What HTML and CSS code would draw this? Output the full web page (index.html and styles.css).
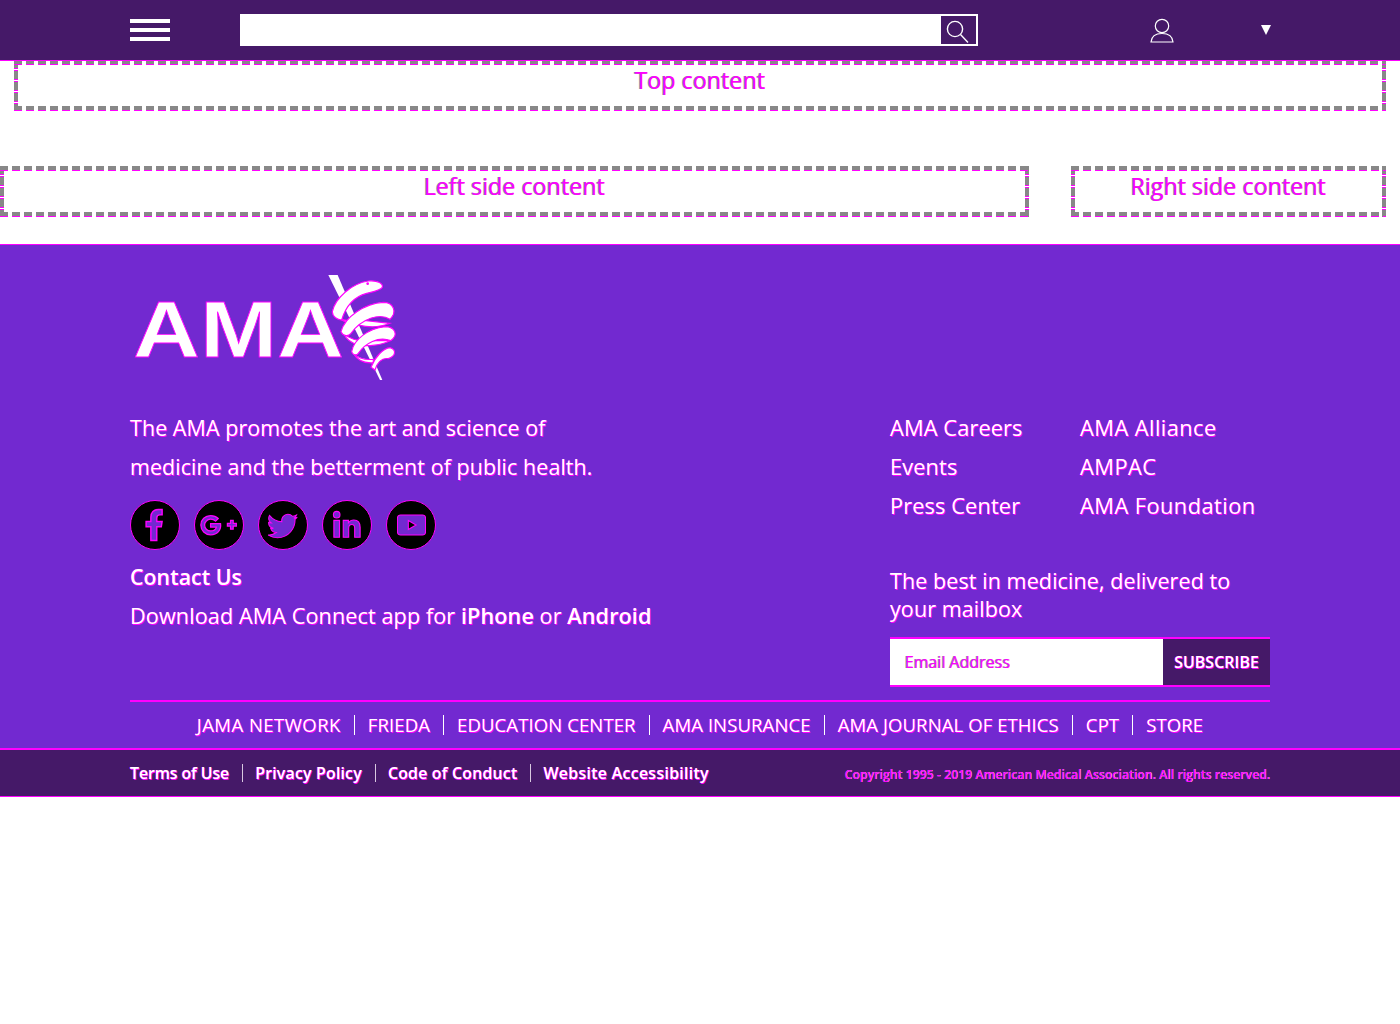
FILE: index.html
```html
<!DOCTYPE html>
<html lang="en">

<head>
    <meta charset="UTF-8">
    <title>American Medical Association</title>
    <link rel="stylesheet" href="styles.css">
</head>

<body>
    <header class="topbar">
        <div class="burger"><span></span><span></span><span></span></div>
        <form class="search">
            <input type="text" class="search-input" aria-label="Search">
            <button type="button" class="search-btn" aria-label="Search">
                <svg width="24" height="24" viewBox="0 0 24 24" fill="none" stroke="#fff" stroke-width="1.4">
                    <circle cx="10" cy="10" r="7.6" />
                    <path d="M15.5 15.5 L23 23.5" />
                </svg>
            </button>
        </form>
        <svg class="user-icon" width="24" height="25" viewBox="0 0 24 25" fill="none" stroke="#fff" stroke-width="1.2">
            <circle cx="12" cy="8" r="6.7" />
            <path d="M1 24 C1.5 18 6 15.5 12 15.5 C18 15.5 22.5 18 23 24 Z" />
        </svg>
        <span class="caret"></span>
    </header>

    <div class="zone zone-top">Top content</div>

    <div class="side-row">
        <div class="zone zone-left">Left side content</div>
        <div class="zone zone-right">Right side content</div>
    </div>

    <footer class="footer">
        <div class="footer-main">
            <svg class="logo" width="270" height="112" viewBox="0 0 270 112">
                <text x="-1" y="85" class="logo-text" textLength="211" lengthAdjust="spacingAndGlyphs">AMA</text>
                <g transform="translate(191 -2) scale(0.3333)">
                    <path class="logo-staff" d="M10 15 L38 15 L172 330 L165 330 Z" />
                    <path class="logo-return" d="M30 135 C50 155 90 155 105 150 L195 160 C160 175 120 170 100 165 C80 160 55 160 30 135 Z" />
                    <path class="logo-return" d="M55 190 C70 205 100 215 125 212 L195 212 C170 225 130 230 100 225 C80 220 65 210 55 190 Z" />
                    <path class="logo-return" d="M85 250 C100 265 125 270 145 268 L145 278 C125 280 100 275 85 250 Z" />
                    <path class="logo-snake" d="M22 125 C30 85 80 40 130 33 C160 30 175 42 172 52 C165 62 140 66 125 70 C95 78 65 100 50 150 C38 150 22 140 22 125 Z" />
                    <path class="logo-snake" d="M48 185 C60 140 120 100 175 97 C205 97 218 125 195 148 C165 128 110 145 78 190 C70 200 55 200 48 185 Z" />
                    <path class="logo-snake" d="M80 245 C85 210 130 175 180 170 C210 170 222 195 197 212 C160 198 120 220 100 250 C95 258 82 255 80 245 Z" />
                    <path class="logo-snake" d="M138 292 C150 260 175 235 195 233 C214 238 214 258 190 266 C170 262 155 280 150 300 Z" />
                    <circle cx="128" cy="41" r="4" class="logo-eye" />
                </g>
            </svg>

            <div class="footer-cols">
                <div class="footer-left">
                    <p class="tagline">The AMA promotes the art and science of medicine and the betterment of public health.</p>
                    <div class="social">
                        <a class="social-btn" href="#" aria-label="Facebook">
                            <svg width="38" height="38" viewBox="0 0 32 32"><path d="M12.5 29 V17.5 H8.5 V13 H12.5 V9.5 C12.5 5.2 15 3 18.8 3 H22 V7.5 H20 C18.2 7.5 17.5 8.3 17.5 10 V13 H22 L21.3 17.5 H17.5 V29 Z" /></svg>
                        </a>
                        <a class="social-btn" href="#" aria-label="Google Plus">
                            <svg width="42" height="34" viewBox="0 0 40 32"><path d="M12 7 C15 7 17.5 8 19.3 9.8 L16.7 12.3 C15.5 11.2 14 10.5 12 10.5 C8.8 10.5 6.3 13 6.3 16 C6.3 19.2 8.8 21.7 12 21.7 C15 21.7 17 20.2 17.5 18 H12 V14.8 H21.5 C22.3 20.8 18.5 25.3 12 25.3 C6.8 25.3 2.7 21.2 2.7 16 C2.7 11 6.8 7 12 7 Z M28 14.5 H31 V11.5 H33.5 V14.5 H36.5 V17 H33.5 V20 H31 V17 H28 Z" /></svg>
                        </a>
                        <a class="social-btn" href="#" aria-label="Twitter">
                            <svg width="31" height="28" viewBox="0 0 36 32"><path d="M34 7 C32.8 7.6 31.5 8 30 8.1 C31.5 7.2 32.6 5.8 33.2 4.2 C31.7 5 30.2 5.6 28.5 5.9 C27.1 4.5 25.2 3.6 23.1 3.6 C18.5 3.6 15.1 7.9 16.1 12.3 C10.3 12 5.1 9.2 1.7 4.9 C0 7.8 0.8 11.7 3.8 13.7 C2.7 13.7 1.6 13.4 0.7 12.9 C0.6 16.1 2.9 19.1 6.3 19.8 C5.3 20.1 4.2 20.1 3.1 19.9 C4 22.7 6.5 24.6 9.6 24.7 C6.7 27 3.1 28 0 27.6 C3.2 29.6 7 30.8 11 30.8 C24.3 30.8 31.8 19.5 31.4 9.3 C32.5 8.5 33.4 7.6 34 7 Z" /></svg>
                        </a>
                        <a class="social-btn" href="#" aria-label="LinkedIn">
                            <svg width="30" height="30" viewBox="0 0 32 32"><circle cx="5" cy="5" r="3.5" /><path d="M2 11 H8 V29 H2 Z M12 11 H17.5 V13.5 C18.8 11.7 20.8 10.6 23.3 10.6 C28 10.6 30 13.7 30 18.5 V29 H24.2 V19.5 C24.2 17 23.3 15.5 21.2 15.5 C19 15.5 17.8 17 17.8 19.5 V29 H12 Z" /></svg>
                        </a>
                        <a class="social-btn" href="#" aria-label="YouTube">
                            <svg width="29" height="22" viewBox="0 0 32 24"><path fill-rule="evenodd" d="M4 1 H28 C30 1 31.5 2.5 31.5 4.5 V19.5 C31.5 21.5 30 23 28 23 H4 C2 23 0.5 21.5 0.5 19.5 V4.5 C0.5 2.5 2 1 4 1 Z M12.5 7 V17 L21 12 Z" /></svg>
                        </a>
                    </div>
                    <a class="contact" href="#">Contact Us</a>
                    <p class="download">Download AMA Connect app for <a href="#">iPhone</a> or <a href="#">Android</a></p>
                </div>

                <div class="footer-right">
                    <ul class="link-grid">
                        <li><a href="#">AMA Careers</a></li>
                        <li><a href="#">AMA Alliance</a></li>
                        <li><a href="#">Events</a></li>
                        <li><a href="#">AMPAC</a></li>
                        <li><a href="#">Press Center</a></li>
                        <li><a href="#">AMA Foundation</a></li>
                    </ul>
                    <p class="mailbox">The best in medicine, delivered to your mailbox</p>
                    <form class="subscribe">
                        <input type="text" class="email" placeholder="Email Address">
                        <button type="button" class="sub-btn">SUBSCRIBE</button>
                    </form>
                </div>
            </div>

            <nav class="site-links">
                <a href="#">JAMA NETWORK</a>
                <a href="#">FRIEDA</a>
                <a href="#">EDUCATION CENTER</a>
                <a href="#">AMA INSURANCE</a>
                <a href="#">AMA JOURNAL OF ETHICS</a>
                <a href="#">CPT</a>
                <a href="#">STORE</a>
            </nav>
        </div>

        <div class="legal">
            <nav class="legal-links">
                <a href="#">Terms of Use</a>
                <a href="#">Privacy Policy</a>
                <a href="#">Code of Conduct</a>
                <a href="#">Website Accessibility</a>
            </nav>
            <span class="copyright">Copyright 1995 - 2019 American Medical Association. All rights reserved.</span>
        </div>
    </footer>
</body>

</html>
```

FILE: styles.css
```css
* {
    box-sizing: border-box;
}

body {
    margin: 0;
    font-family: "Open Sans", sans-serif;
    background-color: #fff;
    color: #fff;
}

a {
    color: inherit;
    text-decoration: none;
}

p {
    margin: 0;
}

/* top bar */
.topbar {
    position: relative;
    z-index: 1;
    height: 61px;
    display: flex;
    align-items: center;
    padding-left: 130px;
    background-color: #451968;
    border-bottom: 1px solid #f0f;
}

.burger {
    width: 40px;
    display: flex;
    flex-direction: column;
    gap: 5px;
}

.burger span {
    height: 4px;
    background-color: #fff;
}

.search {
    display: flex;
    width: 738px;
    height: 32px;
    margin-left: 70px;
    border: 2px solid #fff;
    background-color: #fff;
}

.search-input {
    flex: 1;
    border: none;
    background-color: #fff;
}

.search-btn {
    width: 35px;
    padding: 2px 4px 0 0;
    border: none;
    background-color: #451968;
}

.search-btn svg {
    display: block;
    margin: 0 auto;
}

.user-icon {
    margin-left: 172px;
    margin-top: 1px;
}

.caret {
    margin-left: 87px;
    border-left: 5px solid transparent;
    border-right: 5px solid transparent;
    border-top: 10px solid #fff;
}

/* dashed placeholders, drawn as gradients to get the magenta edge on each dash */
.zone {
    --gray-x: repeating-linear-gradient(90deg, #888 0 8px, transparent 8px 12px);
    --pink-x: repeating-linear-gradient(90deg, #f0f 0 8px, transparent 8px 12px);
    --side-y: repeating-linear-gradient(180deg, #888 0 8px, #f0f 8px 9px, #fff 9px 10px, #f0f 10px 11px);
    height: 51px;
    padding-top: 4px;
    background-image: var(--gray-x), var(--pink-x), var(--gray-x), var(--pink-x), var(--side-y), var(--side-y);
    background-repeat: no-repeat;
    background-size: 100% 4px, 100% 5px, 100% 4px, 100% 5px, 4px 100%, 4px 100%;
    background-position: 0 0, 0 0, 0 46px, 0 46px, 0 0, 100% 0;
    text-align: center;
    font-size: 23.3px;
    line-height: 32px;
    color: #f0f;
    text-shadow: -1px 0 #888;
}

.zone-top {
    margin: -1px 14px 0;
}

.side-row {
    display: flex;
    justify-content: space-between;
    margin-top: 55px;
    padding-right: 14px;
    margin-bottom: 27px;
}

.zone-left {
    width: 1029px;
}

.zone-right {
    width: 315px;
}

/* footer */
.footer {
    background-color: #7229d0;
    border-top: 1px solid #f0f;
}

.footer-main {
    padding: 27px 130px 0;
}

.footer a,
.tagline,
.download,
.mailbox {
    text-shadow: 0.5px 0.5px 0 #f0f, -0.5px -0.5px 0 #f0f;
}

.logo {
    display: block;
    margin-left: 4px;
}

.logo-text {
    font-family: "Liberation Sans", sans-serif;
    font-size: 80px;
    font-weight: 700;
    fill: #fff;
    stroke: #f0f;
    stroke-width: 0.8;
}

.logo-staff {
    fill: #fff;
}

.logo-snake,
.logo-return {
    fill: #fff;
    stroke: #f0f;
    stroke-width: 3.5;
}

.logo-eye {
    fill: #f0f;
}

.footer-cols {
    display: flex;
    justify-content: space-between;
    margin-top: 24px;
}

.footer-left {
    width: 540px;
}

.tagline {
    width: 480px;
    font-size: 21.6px;
    line-height: 39px;
}

.social {
    display: flex;
    gap: 14px;
    margin-top: 14px;
}

.social-btn {
    width: 50px;
    height: 50px;
    display: flex;
    align-items: center;
    justify-content: center;
    border-radius: 50%;
    background-color: #000;
    border: 1px solid #f0f;
}

.social-btn svg {
    fill: #7229d0;
    stroke: #f0f;
    stroke-width: 1.2;
}

.contact {
    display: block;
    margin-top: 8px;
    font-size: 21.4px;
    font-weight: 600;
    line-height: 38px;
}

.download {
    font-size: 21.8px;
    line-height: 39px;
    white-space: nowrap;
}

.download a {
    font-weight: 600;
}

.footer-right {
    width: 380px;
}

.link-grid {
    display: grid;
    grid-template-columns: 190px 190px;
    margin: 0;
    padding: 0;
    list-style: none;
    font-size: 22px;
    line-height: 39px;
    white-space: nowrap;
}

.link-grid li:nth-child(even) {
    letter-spacing: 0.35px;
}

.mailbox {
    margin-top: 42px;
    font-size: 21.7px;
    line-height: 28px;
}

.subscribe {
    display: flex;
    height: 50px;
    margin-top: 14px;
    border-top: 2px solid #f0f;
    border-bottom: 2px solid #f0f;
}

.email {
    width: 273px;
    padding: 0 15px;
    border: none;
    font-family: "Open Sans", sans-serif;
    font-size: 16px;
    background-color: #fff;
}

.email::placeholder {
    color: #f0f;
    text-shadow: -1px 0 #888;
    opacity: 1;
}

.sub-btn {
    flex: 1;
    padding: 0;
    border: none;
    background-color: #451968;
    color: #fff;
    font-family: "Open Sans", sans-serif;
    font-size: 16px;
    font-weight: 600;
    text-shadow: 0.5px 0.5px 0 #f0f, -0.5px -0.5px 0 #f0f;
}

.site-links {
    display: flex;
    justify-content: center;
    align-items: center;
    height: 48px;
    margin-top: 13px;
    border-top: 2px solid #f0f;
    font-size: 18.7px;
}

.site-links a:first-child {
    letter-spacing: 0.35px;
}

.site-links a + a,
.legal-links a + a {
    margin-left: 13px;
    padding-left: 13px;
    border-left: 1px solid #fff;
}

.site-links a {
    line-height: 20px;
}

.legal {
    height: 49px;
    display: flex;
    align-items: center;
    justify-content: space-between;
    padding: 0 130px;
    background-color: #451968;
    border-top: 2px solid #f0f;
    border-bottom: 1px solid #f0f;
}

.legal-links {
    display: flex;
    font-size: 16px;
    font-weight: 600;
    letter-spacing: 0.14px;
}

.legal-links a {
    line-height: 18px;
}

.legal-links a:first-child {
    letter-spacing: -0.15px;
}

.legal-links a:last-child {
    letter-spacing: 0.25px;
}

.legal-links a + a {
    padding-left: 12px;
    border-left-color: #d8c8e0;
}

.copyright {
    margin-top: 2px;
    font-size: 12.3px;
    font-weight: 600;
    color: #f0f;
    text-shadow: 0.3px 0 #e8d0f0;
}
```
